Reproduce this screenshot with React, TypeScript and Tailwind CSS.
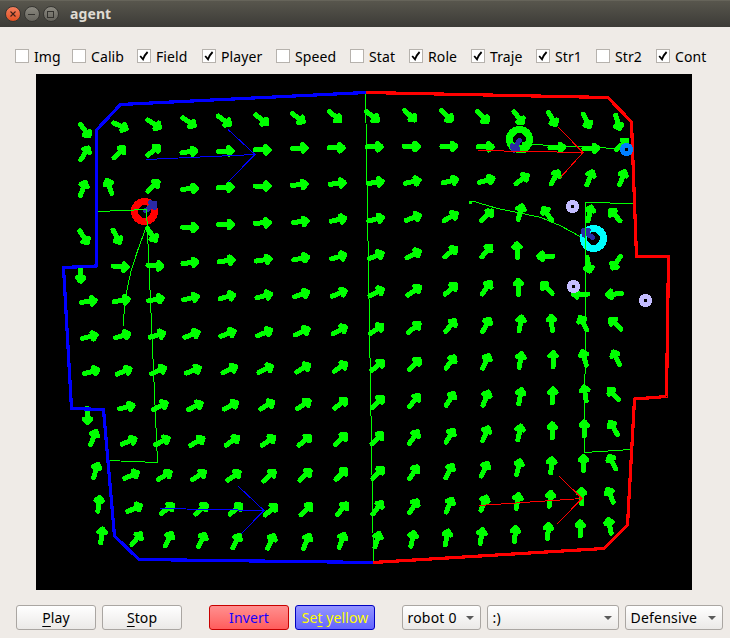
import React from "react";

// Flow field arrows, one list per grid row: [centre x, centre y, heading in degrees]
const FLOW: number[][][] = [
  [[84.5,130,53],[119.7,125.5,25],[153.5,123.5,33],[188.3,121.5,35],[223.7,120,37],[261,119,40],[297.5,117.3,37],[334.3,115.7,42],[371.7,115.7,38],[409.3,114.8,44],[446,115,46],[482,116.3,46],[518,117,52],[551.7,118.3,60],[586,120.3,64],[617.3,121.7,74]],
  [[84.3,153.3,-57],[118.7,152.3,-45],[153,150.3,-38],[188.7,151.3,-8],[225,150.7,-3],[262,149.5,0],[299,147.7,-3],[336,147.3,0],[374,146.3,0],[411,146,0],[448.7,146,0],[485,146.3,0],[520.5,147,0],[556.7,147,0],[590.7,148,0],[621.3,144.5,-42]],
  [[82.5,188.3,-70],[109,186.3,-110],[152.7,186,-43],[189.3,188.3,-5],[225,187,-2],[262,185.7,-1],[299,184.3,-5],[337,183,-7],[375,182,-9],[412,181.3,-13],[449.7,180.7,-14],[486,180,-16],[521.3,179,-36],[554.3,177.3,-60],[589.3,177.7,-67],[621.7,177.7,-70]],
  [[83.3,236.7,58],[116,236,62],[151.3,234.3,55],[189.3,227,2],[225.3,224.3,-1],[262,222.5,-3],[300,221.3,-6],[337.7,219.3,-12],[375.3,218.7,-15],[412.7,217.3,-21],[450,216.7,-29],[486.3,215.3,-43],[519.7,212,-75],[547,213.7,-125],[589.3,213.3,-77],[614.7,215,-133]],
  [[80.3,274,90],[120,266.3,5],[154.7,265.3,4],[189.7,262.3,-7],[226,260.3,-9],[263,259.5,-9],[300.5,258,-12],[338,256.5,-16],[375.5,255.5,-22],[413,254,-27],[450,252,-38],[486,251,-50],[516.7,250,-92],[545.3,256,180],[588,264,80],[616,262,125]],
  [[88,301,-8],[121,300,-10],[155.3,299,-12],[190.3,297.7,-14],[226.7,296.3,-15],[263.5,295.5,-16],[301,294,-19],[338.5,293,-23],[376,292,-28],[413.5,290.5,-35],[450,289,-43],[486,287.7,-56],[518,286.7,-90],[546.7,288,-135],[580,293.7,180],[614,293.7,175]],
  [[89,336.3,-14],[122,335.3,-17],[156.7,334.7,-17],[191.3,334.3,-20],[227.3,333.3,-20],[264,332.5,-23],[301.5,331.5,-25],[339,330,-29],[376,329,-35],[413.5,327.5,-40],[450,325.5,-48],[485.7,324.7,-62],[520,323.3,-80],[551.3,322.7,-95],[583,323,-118],[615.3,323.7,-135]],
  [[91,371.3,-16],[123.3,371,-22],[158,370.3,-24],[192.7,370,-22],[229,369.3,-25],[265,368.8,-27],[302.5,368,-30],[339.7,367,-34],[377,365.5,-39],[414,364,-46],[450,362,-54],[485.3,361.3,-65],[520,360,-80],[552.7,359,-90],[584,357.7,-105],[616,357.7,-115]],
  [[87,415.3,88],[126,406.7,-15],[159.7,405.7,-27],[194.7,406,-27],[230.3,405.3,-28],[266.5,405,-30],[303,404.3,-34],[340,403.3,-38],[377,402,-44],[413.7,400.5,-51],[449.7,398.7,-58],[485.3,398,-68],[519.7,396,-80],[552.3,395.3,-88],[584.7,393.3,-98],[613.3,394,-132]],
  [[93,437.3,-68],[128.3,441,-22],[161.7,441,-27],[196.7,441.3,-30],[231.7,440.7,-34],[267.7,440.7,-35],[304,440.3,-40],[340.3,439,-43],[376.7,438.3,-45],[413.3,437,-55],[449.3,435.7,-60],[485,433.7,-68],[519,432.3,-78],[552,430.3,-90],[584,428.3,-90],[613.3,427.7,-120]],
  [[95.3,470.3,-73],[131,475,-25],[164,475.3,-32],[198.3,475.3,-33],[233.3,475.7,-36],[268.7,475.7,-42],[304.7,475,-43],[340.7,474,-45],[377.3,473,-47],[413,472.3,-57],[448.7,471,-64],[484,469,-66],[518,467,-76],[551,465,-85],[583,463,-90],[612,462,-116]],
  [[98.3,503.7,-83],[134,508,-25],[166.7,508.7,-37],[200.7,509,-40],[235.3,509,-40],[270.3,509.7,-42],[305.7,509.3,-45],[341.7,508.7,-50],[377,507.7,-52],[413,506.3,-58],[448.7,505,-66],[483.3,503,-68],[517,501,-80],[549.7,498.7,-84],[581.3,496,-90],[610,495,-112]],
  [[101.3,535.3,-82],[136,538.7,-50],[168,539,-65],[201.3,540,-64],[235.7,541,-64],[270.3,541.3,-64],[306,541.3,-66],[341.3,540.3,-70],[376.7,539.7,-73],[412,538.7,-78],[446.3,537.3,-78],[481,536,-80],[514.7,534,-86],[547.7,531,-86],[580,528.3,-90],[609.3,525.7,-102]],
];

const MARKERS = [
  { x: 572.5, y: 206.5, color: "#c3bcff" },
  { x: 573.5, y: 286.5, color: "#c3bcff" },
  { x: 645.5, y: 300.5, color: "#c3bcff" },
  { x: 626.5, y: 149.5, color: "#0080ff" },
];

function FieldView() {
  return (
    <svg className="block h-[516px] w-[656px] bg-black" viewBox="36 74 656 516" shapeRendering="crispEdges" fill="none">
      <g stroke="#00ff00" strokeWidth="5" strokeLinecap="round" strokeLinejoin="round" transform="translate(0.4 0.4)">
        {FLOW.flat().map(([x, y, a], i) => (
          <path key={i} fill="#00ff00" d="M-7.2 0H6.8M3.4 -3.3L6.8 0L3.4 3.3Z" transform={`translate(${x} ${y}) rotate(${a})`} />
        ))}
      </g>

      <circle cx="144.5" cy="211.5" r="10" stroke="#ff0000" strokeWidth="7.2" />
      <circle cx="519.5" cy="139.5" r="10" stroke="#00ff00" strokeWidth="7.2" />
      <circle cx="593.5" cy="238.5" r="10" stroke="#00ffff" strokeWidth="7.2" />
      <g stroke="#2a2aa5" fill="#2a2aa5" strokeWidth="5" strokeLinecap="round" strokeLinejoin="round">
        <path d="M-6 0H5.6M2.4 -3.2L5.6 0L2.4 3.2Z" transform="translate(150.5 206.8) rotate(-38)" />
        <path d="M-6 0H5.6M2.4 -3.2L5.6 0L2.4 3.2Z" transform="translate(516.4 145.4) rotate(121)" />
        <path d="M-6 0H5.6M2.4 -3.2L5.6 0L2.4 3.2Z" transform="translate(588 234) rotate(-141)" />
      </g>

      <g stroke="#00ff00" strokeWidth="1">
        <path d="M365.5 93L373.5 562" />
        <path d="M98 211.5L146.5 209.5L157.5 462.5L108 460.5" />
        <path d="M634 203.5L585.5 202.5V300L584.5 452.5L631 449.5" />
        <path d="M146.5 226L137.5 251L131 271L126.5 292L124.3 307L123.5 326" />
        <path d="M469 201.5H474L497.5 208.5L517.5 212.5L541 217.5L561 226L580 236.5" />
        <path d="M531 144.5L600.5 147.5L616 149" />
        <path d="M469 203h3" strokeWidth="2" />
      </g>

      <g stroke="#0000ff" strokeWidth="1">
        <path d="M146 159.5L255 154.5M228 129.5L255 154.5L228 182" />
        <path d="M160 508.5L264 510.5M238 486L264 510.5L241 534" />
      </g>
      <g stroke="#ff0000" strokeWidth="1">
        <path d="M478 150.5L583 152.5M558 127L583 152.5L560 178" />
        <path d="M479 505.5L582 498.5M559 476L582 498.5L557 524" />
      </g>

      <path stroke="#0000ff" strokeWidth="3.2" strokeLinejoin="round" d="M366 92.5L120.5 104.5L96.5 130V266L63.5 267.5L71.5 408.5L103.5 409.5L114.5 536L139 559.5L373 562.5" />
      <path stroke="#ff0000" strokeWidth="3.2" strokeLinejoin="round" d="M366 92.5L608 97.5L631.5 122L636.5 256.5H668.5L666.5 396.5L634.5 399L627.5 525L604 548.5L373 562.5" />

      {MARKERS.map((m, i) => (
        <g key={i}>
          <circle cx={m.x} cy={m.y} r="6.6" fill={m.color} />
          <rect x={m.x - 1.5} y={m.y - 1.5} width="3" height="3" fill="#000" />
        </g>
      ))}
    </svg>
  );
}

function Check({ label, on, cell }: { label: string; on?: boolean; cell: string }) {
  return (
    <label className={`flex h-[14px] shrink-0 items-center gap-[5px] ${cell}`}>
      <span className="flex size-[14px] shrink-0 items-center justify-center border border-[#b6b2ad] bg-white">
        {on && (
          <svg className="size-[10px]" viewBox="0 0 10 10" fill="none" stroke="#000" strokeWidth="1.8">
            <path d="M1.2 5L4 8.3Q5.4 4.2 8.6 1" />
          </svg>
        )}
      </span>
      <span className="whitespace-nowrap pt-[2px] leading-[18px]">{label}</span>
    </label>
  );
}

function Button({ children, className }: { children: React.ReactNode; className: string }) {
  return (
    <button className={`h-[25px] w-20 shrink-0 whitespace-nowrap rounded-[3px] border pt-px text-center leading-[22px] ${className}`}>
      {children}
    </button>
  );
}

function Combo({ text, className }: { text: string; className: string }) {
  return (
    <div className={`flex h-[25px] shrink-0 items-center justify-between rounded-[3px] border border-[#aaa6a2] bg-linear-to-b from-white to-[#ebe9e7] pl-[4.5px] pr-[6px] pt-px ${className}`}>
      <span className="whitespace-nowrap leading-[22px] tracking-[0.2px]">{text}</span>
      <svg className="h-[4px] w-[8px]" viewBox="0 0 8 4" fill="#5a5a5a">
        <path d="M0 0H8L4 4Z" />
      </svg>
    </div>
  );
}

const PLAIN = "border-[#aaa6a2] bg-linear-to-b from-white to-[#ebe9e7]";

function Key({ children }: { children: string }) {
  return <span className="underline decoration-1 underline-offset-[3px] [text-decoration-skip-ink:none]">{children}</span>;
}

export default function App() {
  return (
    <div className="flex h-[638px] w-[730px] flex-col overflow-hidden bg-[#efebe7] font-['Noto_Sans','Open_Sans',sans-serif] text-[14px] tracking-[0.1px] text-black">
      <header className="flex h-[27px] shrink-0 items-center gap-[3px] border-t border-[#66645a] bg-linear-to-b from-[#58564d] to-[#3c3b37] pl-[4.5px]">
        <span className="flex size-4 items-center justify-center rounded-full border border-[#373632] bg-linear-to-b from-[#f37e5c] to-[#e2501f]">
          <svg className="size-[6px]" viewBox="0 0 6 6" stroke="#3c2019" strokeWidth="1.1"><path d="M.5 .5L5.5 5.5M5.5 .5L.5 5.5" /></svg>
        </span>
        <span className="flex size-4 items-center justify-center rounded-full border border-[#373632] bg-linear-to-b from-[#8b8980] to-[#66645d]">
          <span className="h-px w-[7px] bg-[#33322e]" />
        </span>
        <span className="flex size-4 items-center justify-center rounded-full border border-[#373632] bg-linear-to-b from-[#8b8980] to-[#66645d]">
          <span className="size-[7px] border border-[#33322e]" />
        </span>
        <h1 className="ml-[8.5px] text-[14px] font-bold leading-[20px] text-[#dfdbd2]">agent</h1>
      </header>

      <div className="flex h-[47px] shrink-0 items-start pl-[15px] pt-[22px]">
        <Check label="Img" cell="w-[57px]" />
        <Check label="Calib" cell="w-[65px]" />
        <Check label="Field" on cell="w-[65px]" />
        <Check label="Player" on cell="w-[74px]" />
        <Check label="Speed" cell="w-[74px]" />
        <Check label="Stat" cell="w-[59px]" />
        <Check label="Role" on cell="w-[62px]" />
        <Check label="Traje" on cell="w-[65px]" />
        <Check label="Str1" on cell="w-[60px]" />
        <Check label="Str2" cell="w-[60px]" />
        <Check label="Cont" on cell="w-[60px]" />
      </div>

      <main className="flex shrink-0 justify-start pl-9">
        <FieldView />
      </main>

      <footer className="flex shrink-0 gap-[6px] pl-4 pt-[15px]">
        <Button className={PLAIN}><Key>P</Key>lay</Button>
        <Button className={`${PLAIN} mr-[21px]`}><Key>S</Key>top</Button>
        <Button className="border-[#c80000] bg-linear-to-b from-[#ff8f8f] to-[#ff5c5c] text-[#1400ff]">Invert</Button>
        <Button className="mr-[21px] border-[#0000c0] bg-linear-to-b from-[#9494ff] to-[#6464ff] text-[#ffff00]">Se<Key>t</Key> yellow</Button>
        <Combo text="robot 0" className="w-[79px]" />
        <Combo text=":)" className="w-[132px]" />
        <Combo text="Defensive" className="w-[98px]" />
      </footer>
    </div>
  );
}
